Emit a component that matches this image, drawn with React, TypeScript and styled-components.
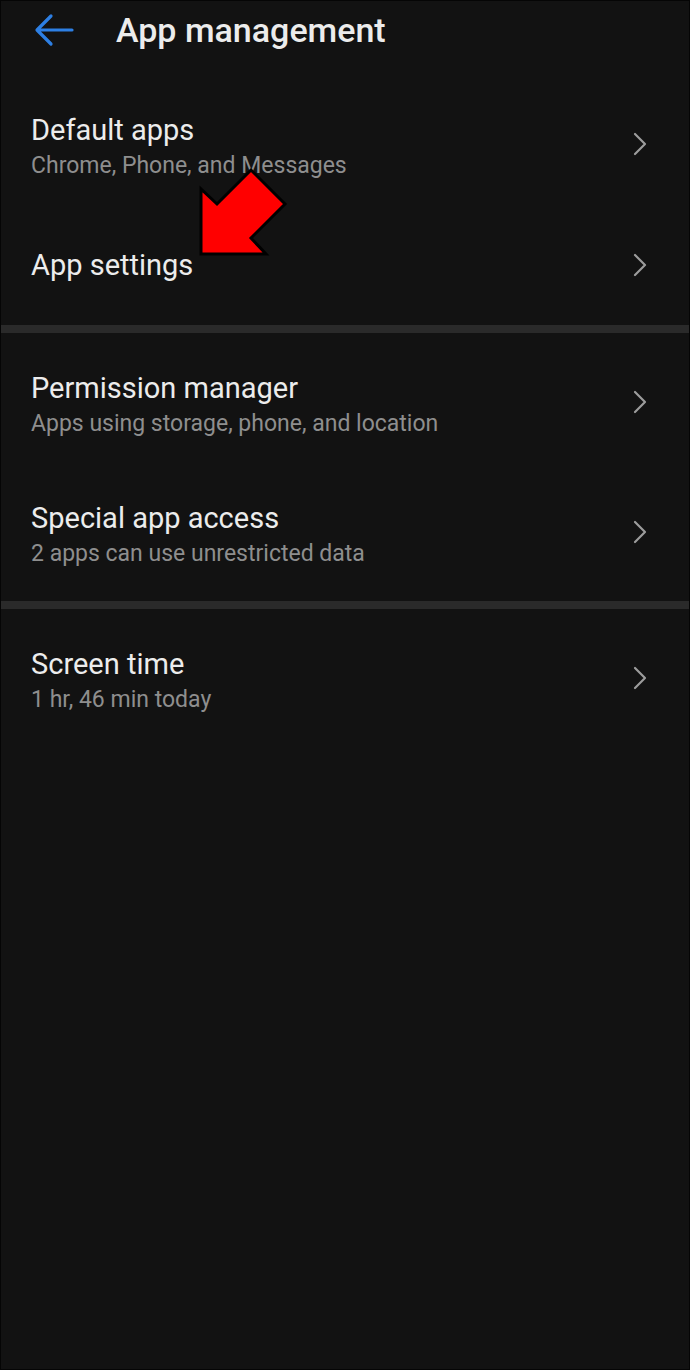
import React from 'react'
import styled, { createGlobalStyle } from 'styled-components'

const GlobalStyle = createGlobalStyle`
  html, body {
    margin: 0;
    padding: 0;
    background: #121212;
  }
  body {
    font-family: Roboto, 'Noto Sans', 'Liberation Sans', sans-serif;
  }
`

type Item = { title: string; subtitle?: string }

const groups: Item[][] = [
  [
    { title: 'Default apps', subtitle: 'Chrome, Phone, and Messages' },
    { title: 'App settings' },
  ],
  [
    { title: 'Permission manager', subtitle: 'Apps using storage, phone, and location' },
    { title: 'Special app access', subtitle: '2 apps can use unrestricted data' },
  ],
  [{ title: 'Screen time', subtitle: '1 hr, 46 min today' }],
]

export default function App() {
  return (
    <Screen>
      <GlobalStyle />
      <Header>
        <BackButton aria-label="Back">
          <svg width="40" height="34" viewBox="0 0 40 34" fill="none">
            <path
              d="M38 17H4M17 3L3 17l14 14"
              stroke="#2d7fe3"
              strokeWidth="3.2"
              strokeLinecap="round"
              strokeLinejoin="round"
            />
          </svg>
        </BackButton>
        <Title>App management</Title>
      </Header>
      <List>
        {groups.map((group, gi) => (
          <React.Fragment key={gi}>
            {gi > 0 && <Divider />}
            <Group>
              {group.map(item => (
                <Row key={item.title} single={!item.subtitle}>
                  <Texts single={!item.subtitle}>
                    <RowTitle>{item.title}</RowTitle>
                    {item.subtitle && <RowSub>{item.subtitle}</RowSub>}
                  </Texts>
                  <Chevron width="14" height="24" viewBox="0 0 14 24" fill="none">
                    <path
                      d="M2 2l10 10-10 10"
                      stroke="#9c9c9c"
                      strokeWidth="2.2"
                      strokeLinecap="round"
                      strokeLinejoin="round"
                    />
                  </Chevron>
                </Row>
              ))}
            </Group>
          </React.Fragment>
        ))}
        <Pointer width="90" height="90" viewBox="0 0 90 90">
          <polygon
            points="2,89 2,24 18,39 52,5 86,39 52,73 67,89"
            fill="#ff0000"
            stroke="#000"
            strokeWidth="3"
            strokeLinejoin="miter"
          />
        </Pointer>
      </List>
    </Screen>
  )
}

const Screen = styled.div`
  box-sizing: border-box;
  width: 690px;
  height: 1370px;
  background: #121212;
  border: 1px solid #050505;
  overflow: hidden;
`

const Header = styled.div`
  display: flex;
  align-items: center;
  height: 58px;
  padding-left: 33px;
`

const BackButton = styled.div`
  display: flex;
  align-items: center;
  width: 82px;
`

const Title = styled.div`
  color: #ececec;
  font-size: 34px;
  font-weight: 500;
`

const List = styled.div`
  position: relative;
  padding-top: 20px;
`

const Group = styled.div`
  display: flex;
  flex-direction: column;
`

const Row = styled.div<{ single: boolean }>`
  display: flex;
  align-items: center;
  justify-content: space-between;
  height: ${p => (p.single ? 112 : 130)}px;
  padding: 0 42px 0 30px;
`

const Texts = styled.div<{ single: boolean }>`
  display: flex;
  flex-direction: column;
  gap: 6px;
  margin-top: ${p => (p.single ? 0 : 6)}px;
`

const RowTitle = styled.div`
  color: #ececec;
  font-size: 29px;
  line-height: 32px;
`

const RowSub = styled.div`
  color: #8e8e8e;
  font-size: 23px;
  line-height: 28px;
`

const Chevron = styled.svg`
  flex-shrink: 0;
`

const Divider = styled.div`
  height: 8px;
  margin: 4px 0 4px;
  background: #2a2a2a;
`

const Pointer = styled.svg`
  position: absolute;
  left: 198px;
  top: 106px;
  overflow: visible;
`
